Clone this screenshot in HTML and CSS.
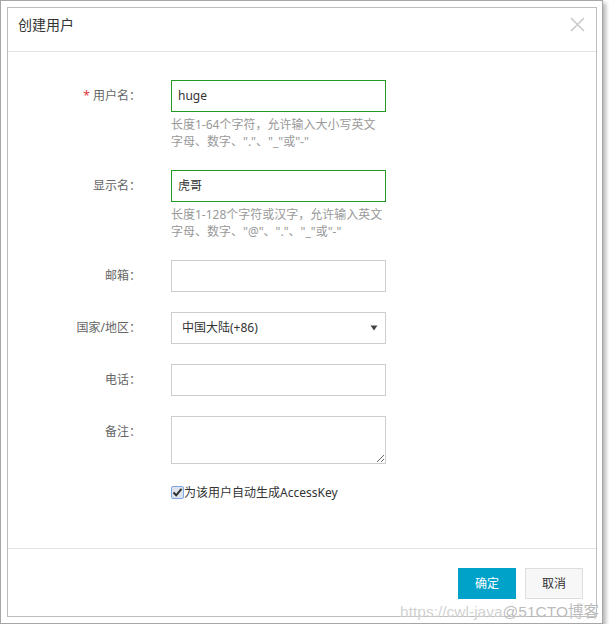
FILE: index.html
```html
<!DOCTYPE html>
<html lang="zh-CN">

<head>
    <meta charset="UTF-8">
    <meta name="viewport" content="width=device-width, initial-scale=1.0">
    <title>创建用户</title>

    <link rel="stylesheet" href="styles.css">
</head>

<body>
    <div class="frame">
        <div class="dialog">
            <div class="dialog-header">
                <h1>创建用户</h1>
                <svg class="close" width="15" height="15" viewBox="0 0 15 15">
                    <path d="M1 1L14 14M14 1L1 14" stroke="#c9c9c9" stroke-width="1.6" fill="none" />
                </svg>
            </div>

            <div class="dialog-body">
                <div class="form-row">
                    <label><span class="req">*</span> 用户名：</label>
                    <div class="field">
                        <div class="input ok">huge</div>
                        <div class="help">长度1-64个字符，允许输入大小写英文字母、数字、"."、"_"或"-"</div>
                    </div>
                </div>
                <div class="form-row">
                    <label>显示名：</label>
                    <div class="field">
                        <div class="input ok">虎哥</div>
                        <div class="help">长度1-128个字符或汉字，允许输入英文字母、数字、"@"、"."、"_"或"-"</div>
                    </div>
                </div>
                <div class="form-row">
                    <label>邮箱：</label>
                    <div class="field">
                        <div class="input"></div>
                    </div>
                </div>
                <div class="form-row">
                    <label>国家/地区：</label>
                    <div class="field">
                        <div class="input select"><span>中国大陆(+86)</span>
                            <svg class="caret" width="8" height="6" viewBox="0 0 8 6">
                                <path d="M0.5 0.5H7.5L4 5.5Z" fill="#444" />
                            </svg>
                        </div>
                    </div>
                </div>
                <div class="form-row">
                    <label>电话：</label>
                    <div class="field">
                        <div class="input"></div>
                    </div>
                </div>
                <div class="form-row">
                    <label>备注：</label>
                    <div class="field">
                        <textarea class="textarea"></textarea>
                    </div>
                </div>
                <div class="form-row">
                    <div></div>
                    <div class="check-line">
                        <span class="checkbox">
                            <svg width="11" height="11" viewBox="0 0 11 11">
                                <path d="M1.5 5.5L4.2 8.3L9.5 1.8" stroke="#333" stroke-width="2" fill="none" />
                            </svg>
                        </span>为该用户自动生成AccessKey
                    </div>
                </div>
            </div>

            <div class="dialog-footer">
                <div class="btn btn-primary">确定</div>
                <div class="btn">取消</div>
            </div>
        </div>
        <div class="watermark">https://cwl-java<span>@51CTO博客</span></div>
    </div>
</body>

</html>
```

FILE: styles.css
```css
* {
    box-sizing: border-box;
}

body {
    margin: 0;
    background-color: #fff;
    font-family: "Noto Sans", "Noto Sans CJK SC", sans-serif;
    font-size: 12px;
    color: #333;
}

.frame {
    position: relative;
    width: 603px;
    height: 624px;
    border: 1px solid #a6a6a6;
    padding: 6px 5px 6px 6px;
    background-color: #fff;
    box-shadow: 3px 3px 4px rgba(0, 0, 0, 0.28);
}

.dialog {
    width: 590px;
    height: 610px;
    border: 1px solid #bdbdbd;
    display: flex;
    flex-direction: column;
}

.dialog-header {
    height: 44px;
    border-bottom: 1px solid #e3e3e3;
    display: flex;
    justify-content: space-between;
    align-items: flex-start;
    padding: 7px 11px 0 10px;
}

h1 {
    margin: 0;
    font-size: 14px;
    font-weight: normal;
    line-height: 20px;
    color: #333;
}

.close {
    margin-top: 2px;
}

.dialog-body {
    flex: 1;
    padding-top: 28px;
}

.form-row {
    display: grid;
    grid-template-columns: 133px 215px;
    column-gap: 30px;
    margin-bottom: 20px;
}

label {
    text-align: right;
    line-height: 32px;
    color: #666;
}

.req {
    color: #e4393c;
}

.input {
    height: 32px;
    border: 1px solid #cdcdcd;
    padding: 0 6px;
    line-height: 30px;
    color: #333;
}

.input.ok {
    border-color: #239b23;
}

.select {
    display: flex;
    justify-content: space-between;
    align-items: center;
    padding: 0 7px 0 10px;
}

.help {
    padding-top: 4px;
    line-height: 17px;
    color: #999;
}

.textarea {
    display: block;
    width: 215px;
    height: 48px;
    margin: 0;
    border: 1px solid #cdcdcd;
    resize: vertical;
}

.check-line {
    display: flex;
    align-items: center;
    height: 14px;
    margin-top: 1px;
    color: #333;
}

.checkbox {
    width: 13px;
    height: 13px;
    border: 1px solid #7ea7e6;
    border-radius: 2px;
    background-color: #dfe3ec;
    display: flex;
    align-items: center;
    justify-content: center;
}

.dialog-footer {
    height: 68px;
    border-top: 1px solid #e3e3e3;
    display: flex;
    justify-content: flex-end;
    align-items: flex-start;
    gap: 9px;
    padding: 19px 13px 0 0;
}

.btn {
    width: 58px;
    height: 31px;
    line-height: 29px;
    text-align: center;
    border: 1px solid #ddd;
    background-color: #f7f7f7;
    color: #333;
}

.btn-primary {
    border-color: #00a2ca;
    background-color: #00a2ca;
    color: #fff;
}

.watermark {
    position: absolute;
    right: 3px;
    bottom: 2px;
    font-family: "Liberation Sans", "Noto Sans CJK SC", sans-serif;
    font-size: 15.5px;
    color: rgba(170, 170, 170, 0.55);
    text-shadow: 0 0 1px #fff;
}

.watermark span {
    color: rgba(140, 140, 140, 0.6);
}
```
